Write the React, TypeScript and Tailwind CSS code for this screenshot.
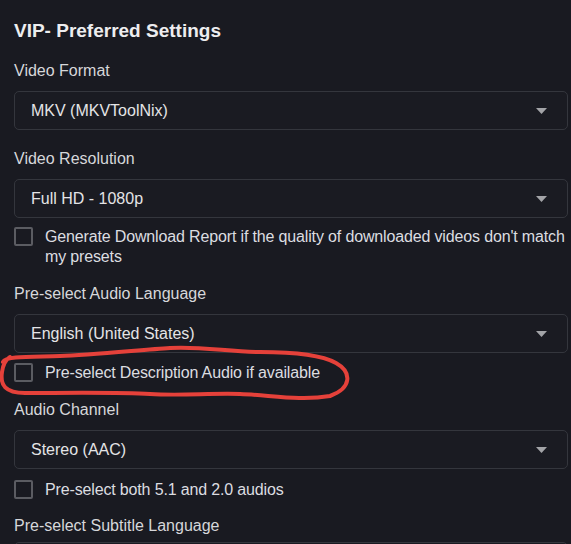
import React from 'react';

const Select = ({ value }: { value: string }) => (
  <div className="flex h-[39px] items-center justify-between rounded-[5px] border border-[#34363d] bg-[#1a1b22] pl-4 pr-[20px]">
    <span className="text-[16px] text-[#e4e4e6]">{value}</span>
    <svg width="11" height="6" viewBox="0 0 11 6" className="shrink-0">
      <path d="M0 0 H11 L5.5 6 Z" fill="#a3a4a8" />
    </svg>
  </div>
);

const Check = ({ children }: { children: React.ReactNode }) => (
  <label className="flex items-start gap-3 text-[16px] leading-[20px] tracking-[-0.15px] text-[#dcdde0]">
    <span className="h-[19px] w-[19px] shrink-0 rounded-[2px] border-2 border-[#5b5c62]" />
    <span>{children}</span>
  </label>
);

const Label = ({ children }: { children: React.ReactNode }) => (
  <div className="text-[16px] leading-[20px] text-[#d6d7da]">{children}</div>
);

export default function App() {
  return (
    <div
      className="relative h-[544px] w-[571px] overflow-hidden bg-[#191a21] pl-[14px] pr-[3px] pt-[19px]"
      style={{ fontFamily: '"Liberation Sans", Arial, sans-serif' }}
    >
      <h1 className="text-[19px] font-bold leading-[24px] text-[#ededef]">VIP- Preferred Settings</h1>

      <div className="mt-[18px]">
        <Label>Video Format</Label>
        <div className="mt-[10px]"><Select value="MKV (MKVToolNix)" /></div>
      </div>

      <div className="mt-[19px]">
        <Label>Video Resolution</Label>
        <div className="mt-[10px]"><Select value="Full HD - 1080p" /></div>
      </div>

      <div className="mt-[9px]">
        <Check>Generate Download Report if the quality of downloaded videos don't match my presets</Check>
      </div>

      <div className="mt-[17px]">
        <Label>Pre-select Audio Language</Label>
        <div className="mt-[10px]"><Select value="English (United States)" /></div>
      </div>

      <div className="mt-[10px]">
        <Check>Pre-select Description Audio if available</Check>
      </div>

      <div className="mt-[17px]">
        <Label>Audio Channel</Label>
        <div className="mt-[10px]"><Select value="Stereo (AAC)" /></div>
      </div>

      <div className="mt-[11px]">
        <Check>Pre-select both 5.1 and 2.0 audios</Check>
      </div>

      <div className="mt-[16px]">
        <Label>Pre-select Subtitle Language</Label>
        <div className="mt-[6px]"><Select value="" /></div>
      </div>

      <svg
        className="pointer-events-none absolute left-0 top-0"
        width="571"
        height="544"
        viewBox="0 0 571 544"
      >
        <path
          d="M3 362 C6 356 30 357 60 356 S140 350 170 348 S230 352 260 352 S320 354 336 363 C352 372 352 388 330 396 C300 401 270 395 240 394 S180 396 150 394 S60 393 25 393 C5 393 0 385 2 372 C3 365 5 360 10 357"
          fill="none"
          stroke="#e5413a"
          strokeWidth="4"
          strokeLinecap="round"
          strokeLinejoin="round"
        />
      </svg>
    </div>
  );
}
